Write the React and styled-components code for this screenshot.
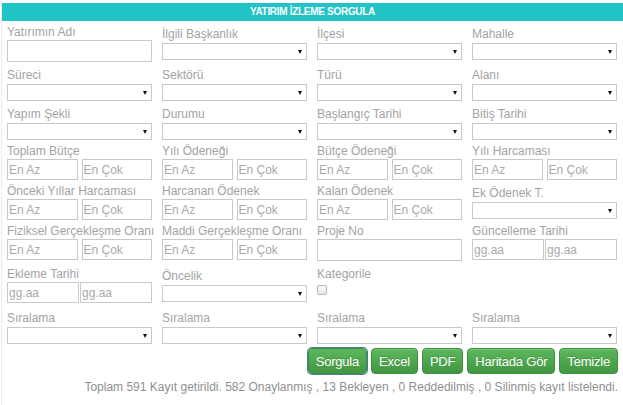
import styled, { createGlobalStyle } from 'styled-components';

const GlobalStyle = createGlobalStyle`
    body {
        margin: 0;
        background: #fff;
        font-family: "Liberation Sans", Arial, sans-serif;
    }
    * { box-sizing: border-box; }
`;

const rows = [
    [
        { label: 'Yatırımın Adı', type: 'text' },
        { label: 'İlgili Başkanlık', type: 'select' },
        { label: 'İlçesi', type: 'select' },
        { label: 'Mahalle', type: 'select' },
    ],
    [
        { label: 'Süreci', type: 'select' },
        { label: 'Sektörü', type: 'select' },
        { label: 'Türü', type: 'select' },
        { label: 'Alanı', type: 'select' },
    ],
    [
        { label: 'Yapım Şekli', type: 'select' },
        { label: 'Durumu', type: 'select' },
        { label: 'Başlangıç Tarihi', type: 'select' },
        { label: 'Bitiş Tarihi', type: 'select' },
    ],
    [
        { label: 'Toplam Bütçe', type: 'range' },
        { label: 'Yılı Ödeneği', type: 'range' },
        { label: 'Bütçe Ödeneği', type: 'range' },
        { label: 'Yılı Harcaması', type: 'range' },
    ],
    [
        { label: 'Önceki Yıllar Harcaması', type: 'range' },
        { label: 'Harcanan Ödenek', type: 'range' },
        { label: 'Kalan Ödenek', type: 'range' },
        { label: 'Ek Ödenek T.', type: 'select' },
    ],
    [
        { label: 'Fiziksel Gerçekleşme Oranı', type: 'range' },
        { label: 'Maddi Gerçekleşme Oranı', type: 'range' },
        { label: 'Proje No', type: 'text' },
        { label: 'Güncelleme Tarihi', type: 'date' },
    ],
    [
        { label: 'Ekleme Tarihi', type: 'date' },
        { label: 'Öncelik', type: 'select' },
        { label: 'Kategorile', type: 'check' },
        null,
    ],
    [
        { label: 'Sıralama', type: 'select' },
        { label: 'Sıralama', type: 'select' },
        { label: 'Sıralama', type: 'select' },
        { label: 'Sıralama', type: 'select' },
    ],
];

function Control({ type }) {
    if (type === 'text') return <TextInput type="text" />;
    if (type === 'select') {
        return (
            <SelectWrap>
                <Select defaultValue="">
                    <option value=""></option>
                </Select>
            </SelectWrap>
        );
    }
    if (type === 'range') {
        return (
            <Pair>
                <HalfInput placeholder="En Az" />
                <HalfInput placeholder="En Çok" />
            </Pair>
        );
    }
    if (type === 'date') {
        return (
            <Pair $tight>
                <HalfInput placeholder="gg.aa" $date />
                <HalfInput placeholder="gg.aa" $date />
            </Pair>
        );
    }
    return <Check />;
}

export default function App() {
    const buttons = ['Sorgula', 'Excel', 'PDF', 'Haritada Gör', 'Temizle'];

    return (
        <Panel>
            <GlobalStyle />
            <Header>YATIRIM İZLEME SORGULA</Header>
            <Form>
                {rows.map((row, r) =>
                    row.map((f, i) =>
                        f ? (
                            <Cell key={`${r}-${i}`} $select={f.type === 'select'} $late={r >= 6}>
                                <Label>{f.label}</Label>
                                <Control type={f.type} />
                            </Cell>
                        ) : (
                            <Cell key={`${r}-${i}`} />
                        )
                    )
                )}
            </Form>
            <Actions>
                {buttons.map((b, i) => (
                    <Button key={b} $focused={i === 0}>{b}</Button>
                ))}
            </Actions>
            <Summary>
                Toplam 591 Kayıt getirildi. 582 Onaylanmış , 13 Bekleyen , 0 Reddedilmiş , 0 Silinmiş kayıt listelendi.
            </Summary>
        </Panel>
    );
}

const Panel = styled.div`
    width: 622px;
    margin-left: 1px;
    padding-top: 3px;
    border-left: 1px solid #ececec;
    min-height: 405px;
`;
const Header = styled.div`
    height: 18px;
    background: #20c4c7;
    color: #fff;
    font-size: 10px;
    font-weight: bold;
    letter-spacing: -0.3px;
    text-align: center;
    line-height: 18px;
`;
const Form = styled.div`
    display: grid;
    grid-template-columns: repeat(4, 145px);
    column-gap: 10px;
    row-gap: 4px;
    padding: 4px 0 0 5px;
`;
const Cell = styled.div`
    display: flex;
    flex-direction: column;
    padding-top: ${p => (p.$select ? '2px' : '0')};
    margin-top: ${p => (p.$late ? '2px' : '0')};
`;
const Label = styled.div`
    font-size: 12px;
    line-height: 15px;
    color: #a3a3a3;
    white-space: nowrap;
`;
const TextInput = styled.input`
    width: 145px;
    height: 22px;
    border: 1px solid #c9c9c9;
    padding: 0 2px;
    font: 12px "Liberation Sans", Arial, sans-serif;
    outline: none;
`;
const SelectWrap = styled.div`
    position: relative;
    margin-top: 1px;
    &::after {
        content: '';
        position: absolute;
        right: 5px;
        top: 7px;
        border-left: 2.5px solid transparent;
        border-right: 2.5px solid transparent;
        border-top: 4px solid #111;
        pointer-events: none;
    }
`;
const Select = styled.select`
    display: block;
    width: 145px;
    height: 17px;
    border: 1px solid #c9c9c9;
    background: #fff;
    appearance: none;
    border-radius: 0;
    outline: none;
`;
const Pair = styled.div`
    display: flex;
    justify-content: space-between;
    gap: ${p => (p.$tight ? '1px' : '4px')};
`;
const HalfInput = styled.input`
    flex: 1;
    min-width: 0;
    height: 21px;
    border: 1px solid #c9c9c9;
    padding: 0 1px;
    font: 12px "Liberation Sans", Arial, sans-serif;
    color: #777;
    outline: none;
    &::placeholder {
        color: #aaa;
    }
`;
const Check = styled.span`
    display: block;
    width: 10px;
    height: 10px;
    margin-top: 3px;
    border: 1px solid #b9b9b9;
    border-radius: 2px;
    background: linear-gradient(#fbfbfb, #e6e6e6);
`;
const Actions = styled.div`
    display: flex;
    justify-content: flex-end;
    gap: 4px;
    padding: 4px 5px 0 0;
`;
const Button = styled.button`
    height: 26px;
    padding: 0 7px;
    border: 1px solid #3e8f3e;
    border-radius: 4px;
    background: linear-gradient(#5cb85c, #419641);
    color: #fff;
    font: 13px "Liberation Sans", Arial, sans-serif;
    letter-spacing: -0.2px;
    text-shadow: 0 -1px 0 rgba(0, 0, 0, 0.15);
    box-shadow: ${p => (p.$focused ? '0 0 0 1px #4a7d9a' : 'inset 0 1px 0 rgba(255,255,255,.15)')};
`;
const Summary = styled.div`
    padding: 6px 5px 0 0;
    text-align: right;
    font-size: 12px;
    color: #8f8f8f;
`;
